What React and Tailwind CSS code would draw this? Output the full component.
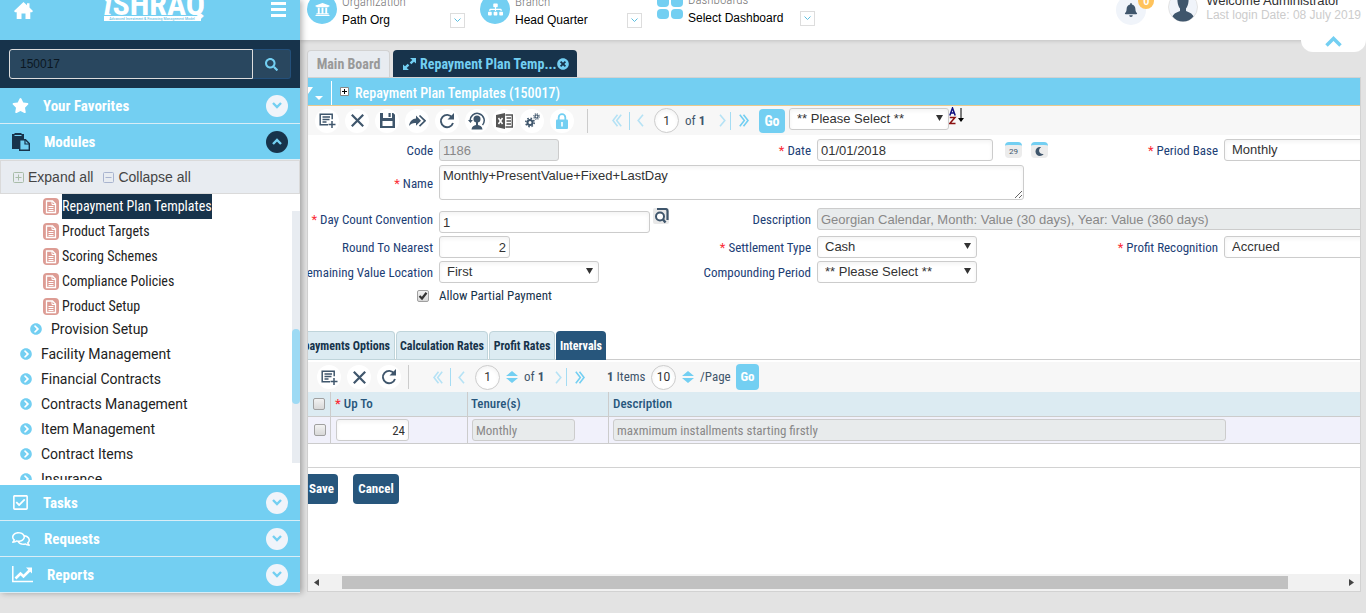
import React from "react";
import { FaUniversity, FaSitemap, FaSearch, FaStar, FaRegCheckSquare, FaRegComments, FaBell, FaTimesCircle, FaLock, FaChevronCircleRight, FaChevronDown, FaChevronUp, FaMoon } from "react-icons/fa";

const cond = "font-['Roboto_Condensed','Roboto',sans-serif]";

function Caret() {
  return (
    <svg width="7" height="6" viewBox="0 0 7 6" className="pointer-events-none absolute right-1.5 top-1/2 -mt-1 fill-[#333]">
      <path d="M0 0h7L3.500 6z" />
    </svg>
  );
}

function Select({ id, label, value, className = "" }) {
  return (
    <div className={"relative w-40 shrink-0 " + className}>
      <select id={id} aria-label={label} defaultValue={value} className="block h-[22px] w-full appearance-none rounded-[3px] border border-[#ccc] bg-white pl-[7px] text-[13px] leading-5 text-[#333] shadow-inner">
        <option>{value}</option>
      </select>
      <Caret />
    </div>
  );
}

function Check({ id, label, defaultChecked }) {
  return (
    <span className="relative block size-3">
      <input id={id} type="checkbox" aria-label={label} defaultChecked={defaultChecked} className="peer block size-3 appearance-none rounded-[2px] border border-[#a0a0a0] bg-linear-to-b from-[#f2f2f2] to-[#d8d8d8]" />
      <svg width="12" height="12" viewBox="0 0 12 12" fill="none" className="pointer-events-none absolute left-0 top-0 hidden peer-checked:block">
        <path d="M2.500 6 5 8.500 9.500 2.800" stroke="#333" strokeWidth="2.200" />
      </svg>
    </span>
  );
}

function Label({ htmlFor, required, children, className = "" }) {
  return (
    <label htmlFor={htmlFor} className={"flex justify-end whitespace-nowrap text-[13px] leading-6 text-[#1c4076] " + cond + " " + className}>
      <span>
        {required && <span className="text-red-500">* </span>}
        {children}
      </span>
    </label>
  );
}

function Section({ icon, label, open }) {
  return (
    <button type="button" className="flex h-9 w-full items-center border-b border-[#d9edf6] bg-[#73cff2] px-3 text-white">
      {icon}
      <span className={"pl-3.5 pt-0.5 text-[15px] font-bold " + cond}>{label}</span>
      <span className={"ml-auto flex size-[22px] items-center justify-center rounded-full text-[#73cff2] " + (open ? "bg-[#17334b]" : "bg-[#f0f4fa]")}>
        {open ? (
          <svg width="10" height="7" viewBox="0 0 10 7" fill="none" stroke="currentColor" strokeWidth="2.400"><path d="M1 6l4-4 4 4" /></svg>
        ) : (
          <svg width="10" height="7" viewBox="0 0 10 7" fill="none" stroke="currentColor" strokeWidth="2.400"><path d="M1 1l4 4 4-4" /></svg>
        )}
      </span>
    </button>
  );
}

function Leaf({ label, active }) {
  return (
    <li className="flex h-[25px] items-center gap-[3px] pl-[43px]">
      <svg width="16" height="17" viewBox="0 0 16 17" className="shrink-0">
        <rect width="16" height="17" rx="4" fill="#dd9c94" />
        <path d="M3.500 3h6l3 3v8.500h-9z" fill="none" stroke="#fff" strokeWidth="1.300" />
        <path d="M9 3v3.500h3.500" fill="none" stroke="#fff" />
        <path d="M5.500 8.500h5M5.500 10.500h5M5.500 12.500h5" stroke="#fff" />
      </svg>
      <a href="#page" className={"h-[25px] whitespace-nowrap text-sm leading-[25px] " + cond + (active ? " bg-[#17334b] text-white" : " text-[#222]")}>{label}</a>
    </li>
  );
}

function Branch({ label, nested }) {
  return (
    <li className={"flex h-[25px] items-center gap-[9px] " + (nested ? "-mt-[3px] pl-[30px]" : "pl-5")}>
      <FaChevronCircleRight size={12} className="shrink-0 text-[#73cff2]" />
      <a href="#module" className="whitespace-nowrap font-['Roboto',sans-serif] text-sm text-[#222]">{label}</a>
    </li>
  );
}

function ExpandBox({ minus }) {
  return (
    <svg width="11" height="11" viewBox="0 0 11 11" fill="none" stroke={minus ? "#a9b4cf" : "#a9bda9"}>
      <rect x=".5" y=".5" width="10" height="10" rx="1" />
      <path d="M2.500 5.500h6" />
      {!minus && <path d="M5.500 2.500v6" />}
    </svg>
  );
}

function ToolButton({ label, children }) {
  return (
    <button type="button" aria-label={label} className="flex size-6 shrink-0 items-center justify-center rounded-full bg-white text-[#3f566c]">
      {children}
    </button>
  );
}

const NewIcon = () => (
  <svg width="17" height="15" viewBox="0 0 17 15" fill="none" stroke="currentColor" strokeWidth="1.500">
    <path d="M9 11.700H1.200V1.200h12v5M3.500 4h7.500M3.500 6.500h7M3.500 9h4M13 8v7M9.500 11.500h7" />
  </svg>
);
const CloseIcon = () => (
  <svg width="13" height="13" viewBox="0 0 13 13" fill="none" stroke="currentColor" strokeWidth="2.200"><path d="M.8.8l11.400 11.400M12.200.8.8 12.200" /></svg>
);
const RefreshIcon = () => (
  <svg width="16" height="16" viewBox="0 0 16 16" fill="none" stroke="currentColor" strokeWidth="1.900">
    <path d="M13.200 4.500A6.200 6.200 0 1 0 14 10" /><path d="M15 0v6.500H8.500z" fill="currentColor" stroke="none" />
  </svg>
);
const SaveIcon = () => (
  <svg width="15" height="15" viewBox="0 0 15 15" fill="currentColor" fillRule="evenodd"><path d="M0 0h3v5h9V0h1.200L15 1.800V15H0zM2.500 8v5h10V8zM8.500 0h2.200v4H8.500z" /></svg>
);
const ForwardIcon = () => (
  <svg width="17" height="14" viewBox="0 0 17 14" fill="currentColor"><path d="M0 12C.8 7 3.500 4.800 7 4.500V1.500l5 5.300-5 5V9C4 8.700 1.800 9.700 0 12z" /><path d="M10.500 1.500 16 6.800l-5.500 5.300" fill="none" stroke="currentColor" strokeWidth="1.700" /></svg>
);
const UserIcon = () => (
  <svg width="18" height="18" viewBox="0 0 18 18" fill="none" stroke="currentColor">
    <path d="M2.300 9.500A7 7 0 1 1 14.500 13" strokeWidth="1.500" />
    <path d="M0 8h4.800L2.500 11z" fill="currentColor" stroke="none" />
    <circle cx="9" cy="7" r="3.500" fill="currentColor" stroke="none" /><path d="M3.500 17.500c.3-3 2.500-4 4.500-4.500v-3h2v3c2 .5 4.300 1.500 4.500 4.500z" fill="currentColor" stroke="none" />
  </svg>
);
const ExcelIcon = () => (
  <svg width="17" height="16" viewBox="0 0 17 16"><path d="M0 2 9 0v16l-9-2z" fill="#555" /><path d="M9.500 2h6.800v12H9.500" fill="none" stroke="#555" strokeWidth="1.400" /><path d="M10.500 5h4.500M10.500 8h4.500M10.500 11h4.500" stroke="#555" strokeWidth="1.700" /><path d="m2.500 5 4 6M6.500 5l-4 6" stroke="#fff" strokeWidth="1.500" /></svg>
);
const GearsIcon = () => (
  <svg width="15" height="15" viewBox="0 0 15 15" fill="none" stroke="currentColor">
    <circle cx="5" cy="9.500" r="2.500" strokeWidth="2" />
    <circle cx="5" cy="9.500" r="4.200" strokeWidth="1.600" strokeDasharray="1.600 1.700" />
    <circle cx="11.500" cy="3.500" r="1.500" strokeWidth="1.200" />
    <circle cx="11.500" cy="3.500" r="2.700" strokeWidth="1.200" strokeDasharray="1.100 1.020" />
  </svg>
);

function Pager({ side }) {
  const left = side === "left";
  return (
    <span className={"flex items-center " + (left ? "gap-[7px]" : "gap-2")}>
      {left && <button type="button" aria-label="First page"><svg width="10" height="13" viewBox="0 0 10 13" fill="none" stroke="#b5e2f5" strokeWidth="1.600"><path d="M5.500.8 1 6.500l4.500 5.700M9.200.8 4.700 6.500l4.500 5.700" /></svg></button>}
      {left && <span className="h-[18px] w-px bg-[#a5dcf3]" />}
      <button type="button" aria-label={left ? "Previous page" : "Next page"}>
        <svg width="7" height="13" viewBox="0 0 7 13" fill="none" stroke="#b5e2f5" strokeWidth="1.600"><path d={left ? "M6 .8 1.200 6.500 6 12.200" : "M1 .8l4.800 5.700L1 12.200"} /></svg>
      </button>
      {!left && <span className="-ml-1 h-[18px] w-px bg-[#a5dcf3]" />}
      {!left && <button type="button" aria-label="Last page"><svg width="10" height="13" viewBox="0 0 10 13" fill="none" stroke="#73cff2" strokeWidth="1.600"><path d="M.8.8l4.500 5.700-4.500 5.700M4.500.8 9 6.500l-4.500 5.700" /></svg></button>}
    </span>
  );
}

function Round({ value, label }) {
  return <input aria-label={label} defaultValue={value} className="block size-[25px] shrink-0 rounded-full border border-[#ccc] bg-white text-center font-['Roboto',sans-serif] text-xs text-[#333] shadow-inner" />;
}

const UpDown = () => (
  <svg width="12" height="12" viewBox="0 0 12 12" fill="#73cff2"><path d="M6 0l6 5H0zM6 12l6-5H0z" /></svg>
);

function HeaderItem({ icon, title, value, width }) {
  return (
    <div className={"flex shrink-0 items-end " + width}>
      {icon}
      <div className="ml-[5px] whitespace-nowrap text-xs leading-4 text-black">
        <div className={"h-5 text-[13px] font-light leading-5 text-[#777] " + cond}>{title}</div>
        {value}
      </div>
      <button type="button" aria-label={"Choose " + title} className="ml-auto flex size-[15px] items-center justify-center border border-[#ddd] bg-white text-[#5bbfe0]">
        <svg width="7" height="5" viewBox="0 0 7 5" fill="none" stroke="currentColor"><path d="M.5.5l3 3 3-3" /></svg>
      </button>
    </div>
  );
}

const box = "block h-[22px] rounded-[3px] border border-[#ccc] px-[3px] text-[13px] leading-5";
const white = " bg-white text-[#333] shadow-inner";
const grey = " bg-[#e8ebec] text-[#888]";

export default function App() {
  return (
    <div className="flex min-h-screen overflow-hidden bg-[#e3e3e3] font-['Liberation_Sans',Arial,sans-serif]">
      <aside className="z-10 w-[300px] shrink-0 self-start shadow-[2px_0_6px_rgba(0,0,0,0.3)]">
        <div className="flex h-10 items-start justify-between overflow-hidden bg-[#73cff2] px-3.5 text-white">
          <a href="#home" aria-label="Home" className="pt-0.5">
            <svg width="19" height="17" viewBox="0 0 19 17" fill="currentColor"><path d="M9.500 0 13 3.200V1.200h2.500v4.300L19 9l-1 1.200h-1.700V17h-4.800v-5.500h-4V17H2.700v-6.800H1L0 9z" /></svg>
          </a>
          <div className="-mt-3 flex w-[97px] flex-col">
            <div className={"h-7 whitespace-nowrap text-center text-[32px] font-bold leading-8 " + cond}><i className="font-['Liberation_Serif',serif]">i</i>SHRAQ</div>
            <div className={"h-[5px] overflow-hidden whitespace-nowrap bg-white text-center text-[4px] leading-[5px] text-[#4bb6e0] " + cond}>Advanced Investment &amp; Financing Management Model</div>
          </div>
          <button type="button" aria-label="Menu" className="pt-0.5">
            <svg width="15" height="15" viewBox="0 0 15 15" fill="#fff"><path d="M0 0h15v3H0zM0 6h15v3H0zM0 12h15v3H0z" /></svg>
          </button>
        </div>
        <div className="flex h-12 items-center bg-[#17334b] px-[9px]">
          <input aria-label="Search" defaultValue="150017" className="h-[30px] min-w-0 flex-1 rounded-l-[3px] border border-[#ddd] bg-[#29475f] px-2.5 text-xs text-[#0b1722]" />
          <button type="button" aria-label="Run search" className="flex h-[30px] w-[38px] items-center justify-center rounded-r-[3px] border border-l-0 border-[#24507a] bg-[#29475f] text-[#73cff2]"><FaSearch size={13} /></button>
        </div>
        <Section icon={<FaStar size={17} />} label="Your Favorites" />
        <Section
          open
          icon={<svg width="18" height="18" viewBox="0 0 18 18"><path d="M0 1h2.500V0h7v1H12v5H7v10H0z" fill="#17334b" /><path d="M2.500 2.500h7" stroke="#73cff2" /><path d="M7.700 6.700h5.800l3.800 3.800v6.800H7.700z" fill="#73cff2" stroke="#17334b" strokeWidth="1.400" /><path d="M13 7v4h4" fill="none" stroke="#17334b" strokeWidth="1.200" /></svg>}
          label="Modules"
        />
        <div className="flex h-[34px] items-center gap-2.5 border border-[#dadada] bg-[#e8ecf1] pl-3 text-sm text-[#444]">
          <button type="button" className="flex items-center gap-1"><ExpandBox />Expand all</button>
          <button type="button" className="flex items-center gap-1"><ExpandBox minus />Collapse all</button>
        </div>
        <div className="flex h-[291px] bg-white pb-[5px]">
          <ul className="min-w-0 flex-1 overflow-hidden">
            <Leaf label="Repayment Plan Templates" active />
            <Leaf label="Product Targets" />
            <Leaf label="Scoring Schemes" />
            <Leaf label="Compliance Policies" />
            <Leaf label="Product Setup" />
            <Branch nested label="Provision Setup" />
            <Branch label="Facility Management" />
            <Branch label="Financial Contracts" />
            <Branch label="Contracts Management" />
            <Branch label="Item Management" />
            <Branch label="Contract Items" />
            <Branch label="Insurance" />
          </ul>
          <div className="my-[17px] w-2 bg-[#e8ecf1] pt-[118px]">
            <div className="h-[75px] rounded bg-[#9ddaf4]" />
          </div>
        </div>
        <Section icon={<FaRegCheckSquare size={17} />} label="Tasks" />
        <Section icon={<FaRegComments size={18} />} label="Requests" />
        <Section
          icon={<svg width="21" height="17" viewBox="0 0 21 17" fill="none" stroke="#fff"><path d="M.8 0v15.500H21" strokeWidth="1.500" /><path d="M3.500 12.500 8.500 7.500l3 3 6-6" strokeWidth="2.600" /><path d="M14 1.500h6v6z" fill="#fff" stroke="none" /></svg>}
          label="Reports"
        />
      </aside>

      <div className="flex min-w-0 flex-1 flex-col">
        <header className="flex h-10 items-end overflow-hidden bg-white pb-3 pl-[7px] shadow-[0_1px_4px_rgba(0,0,0,0.15)]">
          <HeaderItem width="w-[158px]" title="Organization" value="Path Org" icon={<span className="mb-1 flex size-[30px] items-center justify-center rounded-full bg-[#73cff2] text-white"><FaUniversity size={15} /></span>} />
          <div className="w-[15px]" />
          <HeaderItem width="w-[162px]" title="Branch" value="Head Quarter" icon={<span className="mb-1 flex size-[30px] items-center justify-center rounded-full bg-[#73cff2] text-white"><FaSitemap size={15} /></span>} />
          <div className="w-[15px]" />
          <div className="pb-0.5">
            <HeaderItem width="w-[158px]" title="Dashboards" value="Select Dashboard" icon={<span className="mb-[7px] grid grid-cols-2 gap-0.5">{[0, 1, 2, 3].map((n) => <i key={n} className="h-2.5 w-3 rounded-sm bg-[#73cff2]" />)}</span>} />
          </div>
          <div className="ml-auto flex shrink-0 items-end pb-1.5 pr-[5px]">
            <span className="relative -mb-[3px] flex size-[30px] items-center justify-center rounded-full bg-[#f0f4fa] text-[#3f566c]">
              <FaBell size={14} />
              <b className="absolute -right-2 -top-0.5 flex size-4 items-center justify-center rounded-full bg-[#ffc35c] text-[11px] leading-4 text-white">0</b>
            </span>
            <svg width="30" height="30" viewBox="0 0 30 30" className="ml-[22px]"><circle cx="15" cy="15" r="14.500" fill="#f0f4fa" stroke="#e3e3e3" /><path d="M15 3c4 0 6 2.500 5.500 6.500-.3 3-1.200 5.500-2.500 7v2.500c3 1.500 6 2 7.500 5.500-2.500 3-6 5-10.500 5s-8-2-10.500-5c1.500-3.500 4.500-4 7.500-5.500v-2.500c-1.300-1.500-2.200-4-2.500-7C9 5.500 11 3 15 3z" fill="#3f566c" /></svg>
            <div className="ml-2 whitespace-nowrap text-xs leading-3.5">
              <div className="text-[13px] text-[#333]">Welcome Administrator</div>
              <div className="text-[#ccc]">Last login Date: 08 July 2019</div>
            </div>
          </div>
        </header>

        <div className="relative flex items-end gap-[3px] pl-[7px] pt-2.5">
          <button type="button" className={"h-[27px] w-[83px] rounded-t border border-b-0 border-[#d2d2d2] bg-[#e8ecf1] text-sm font-bold text-[#999] " + cond}>Main Board</button>
          <div className={"flex h-[27px] w-[184px] items-center rounded-t bg-[#17334b] pl-2.5 pr-2 text-sm font-bold text-[#73cff2] " + cond}>
            <svg width="13" height="12" viewBox="0 0 13 12" fill="currentColor"><path d="M7 0h6v5.500L11 3.700 8.300 6.200 6.700 4.600 9.300 2zM6 12H0V6.500l2 1.800 2.700-2.500 1.600 1.600L3.700 10z" /></svg>
            <span className="ml-1 whitespace-nowrap">Repayment Plan Temp...</span>
            <button type="button" aria-label="Close tab" className="ml-auto"><FaTimesCircle size={12} /></button>
          </div>
          <button type="button" aria-label="Collapse header" className="absolute right-0 top-0 flex h-3 w-[65px] items-start justify-center rounded-b-xl bg-white text-[#73cff2]">
            <svg width="17" height="11" viewBox="0 0 17 11" fill="none" stroke="currentColor" strokeWidth="3.500" className="-mt-1"><path d="M1.500 9.500l7-7 7 7" /></svg>
          </button>
        </div>

        <main className="ml-[7px] mr-[5px] flex h-[515px] flex-col overflow-hidden border border-[#d2d2d2] bg-white">
          <div className="flex h-7 shrink-0 items-center border-b border-[#e9c98d] bg-[#73cff2] text-white">
            <svg width="24" height="26" viewBox="0 0 24 26" fill="#fff"><path d="M0 8h5L0 15zM7 17h8l-4 4z" /><path d="M23 2h1v24h-1z" /></svg>
            <svg width="9" height="9" viewBox="0 0 9 9" className="ml-2"><path d="M.5.500h8v8h-8z" fill="#fff" stroke="#888" /><path d="M2 4.500h5M4.500 2v5" stroke="#000" /></svg>
            <h1 className={"ml-[6px] pt-0.5 text-sm font-medium " + cond}>Repayment Plan Templates (150017)</h1>
          </div>
          <div className="flex h-[29px] shrink-0 items-center bg-[#f7f7f7] pl-[7px]">
            <div className="flex gap-1.5">
              <ToolButton label="New"><NewIcon /></ToolButton>
              <ToolButton label="Delete"><CloseIcon /></ToolButton>
              <ToolButton label="Save record"><SaveIcon /></ToolButton>
              <ToolButton label="Forward"><ForwardIcon /></ToolButton>
              <ToolButton label="Refresh"><RefreshIcon /></ToolButton>
              <ToolButton label="User log"><UserIcon /></ToolButton>
            </div>
            <div className="ml-[3px] flex gap-1">
              <ToolButton label="Export to Excel"><ExcelIcon /></ToolButton>
              <ToolButton label="Settings"><GearsIcon /></ToolButton>
            </div>
            <span className="ml-1.5 flex"><ToolButton label="Lock">
              <svg width="12" height="16" viewBox="0 0 12 16" fill="#73cff2"><path d="M2.700 7V4.500a3.300 3.300 0 0 1 6.600 0V7" fill="none" stroke="#73cff2" strokeWidth="1.800" /><rect y="6.500" width="12" height="9.500" rx="1" /><path d="M6 9v4.500" stroke="#fff" strokeWidth="1.600" /></svg>
            </ToolButton></span>
            <span className="ml-[13px] mr-6 h-6 w-px bg-[#ccc]" />
            <Pager side="left" />
            <span className="ml-2.5"><Round value="1" label="Page" /></span>
            <span className={"ml-1.5 mr-3 w-[22px] whitespace-nowrap text-[13px] text-[#3f566c] " + cond}>of <b>1</b></span>
            <Pager side="right" />
            <button type="button" className={"ml-2.5 h-6 w-[26px] rounded bg-[#73cff2] text-sm font-bold text-white " + cond}>Go</button>
            <Select id="sort" label="Sort by" value="** Please Select **" className="ml-1 mb-1" />
            <svg width="15" height="18" viewBox="0 0 15 18" className="mb-2.5" fill="none"><path d="M.8 8.500 3.500 1l2.700 7.500M1.800 6h3.500" stroke="#101080" strokeWidth="1.500" /><path d="M.8 10.500H6L.8 16.500H6.500" stroke="#8b1010" strokeWidth="1.500" /><path d="M12 1v11" stroke="#000" /><path d="M9 11h6l-3 4z" fill="#000" /></svg>
          </div>

          <form className="grid shrink-0 grid-cols-[125px_246px_120px_285px_110px_minmax(160px,1fr)] grid-rows-[22px_37px_29px_22px_22px_22px] gap-x-1.5 gap-y-[3px] pt-1" onSubmit={(e) => e.preventDefault()}>
            <Label htmlFor="code">Code</Label>
            <input id="code" disabled defaultValue="1186" className={box + grey + " w-[120px]"} />
            <Label htmlFor="date" required>Date</Label>
            <div className="flex items-center">
              <input id="date" defaultValue="01/01/2018" className={box + white + " w-44"} />
              <button type="button" aria-label="Gregorian calendar" className="ml-3 h-4 w-[17px] rounded-sm border-t-[3px] border-[#73cff2] bg-[#ececec] text-center font-['Roboto',sans-serif] text-[8px] leading-3 text-[#3f566c]">29</button>
              <button type="button" aria-label="Hijri calendar" className="ml-[9px] flex h-4 w-[17px] items-center justify-center rounded-sm border-t-[3px] border-[#73cff2] bg-[#ececec] text-[#3f566c]"><FaMoon size={9} /></button>
            </div>
            <Label htmlFor="period" required>Period Base</Label>
            <Select id="period" value="Monthly" />

            <Label htmlFor="name" required className="pt-2">Name</Label>
            <textarea id="name" defaultValue="Monthly+PresentValue+Fixed+LastDay" className="col-span-3 mt-px block h-[35px] w-[585px] rounded-[3px] border border-[#ccc] bg-white px-[3px] py-0.5 text-[13px] leading-4 text-[#333] shadow-inner" />
            <span className="col-span-2" />

            <Label htmlFor="daycount" required className="pt-1">Day Count Convention</Label>
            <div className="flex items-start pt-1">
              <input id="daycount" defaultValue="1" className={box + white + " mt-[3px] w-[211px] shrink-0"} />
              <button type="button" aria-label="Look up" className="ml-[3px] shrink-0">
                <svg width="16" height="16" viewBox="0 0 16 16"><rect width="16" height="16" rx="2" fill="#e8e8e8" /><path d="M4 1h8.500q2 0 2 2v9" fill="none" stroke="#3f566c" strokeWidth="2.200" /><circle cx="7" cy="8.500" r="4" fill="#fff" stroke="#3f566c" strokeWidth="2" /><path d="m10 11.500 2.500 3" stroke="#3f566c" strokeWidth="2.500" /></svg>
              </button>
            </div>
            <Label htmlFor="desc" className="pt-1">Description</Label>
            <input id="desc" disabled defaultValue="Georgian Calendar, Month: Value (30 days), Year: Value (360 days)" className={box + grey + " col-span-3 mt-1 w-full"} />

            <Label htmlFor="round">Round To Nearest</Label>
            <input id="round" defaultValue="2" className={box + white + " w-[71px] text-right"} />
            <Label htmlFor="settle" required>Settlement Type</Label>
            <Select id="settle" value="Cash" />
            <Label htmlFor="profit" required>Profit Recognition</Label>
            <Select id="profit" value="Accrued" />

            <Label htmlFor="remain">Remaining Value Location</Label>
            <Select id="remain" value="First" />
            <Label htmlFor="compound">Compounding Period</Label>
            <Select id="compound" value="** Please Select **" />
            <span className="col-span-2" />

            <div className="flex items-start justify-end pr-1 pt-1"><Check id="partial" defaultChecked /></div>
            <label htmlFor="partial" className={"text-[13px] leading-5 text-[#17334b] " + cond}>Allow Partial Payment</label>
          </form>

          <div className={"mt-[23px] flex h-[29px] shrink-0 gap-px border-b border-[#ccc] text-xs font-bold " + cond}>
            <button type="button" className="flex h-[29px] w-[87px] items-center justify-end whitespace-nowrap rounded-tr border border-l-0 border-[#bfd4da] bg-[#dcebf2] pr-1 text-[#17334b]"><span>Repayments Options</span></button>
            <button type="button" className="h-[29px] w-[92px] whitespace-nowrap rounded-t border border-[#bfd4da] bg-[#dcebf2] text-[#17334b]">Calculation Rates</button>
            <button type="button" className="h-[29px] w-[66px] whitespace-nowrap rounded-t border border-[#bfd4da] bg-[#dcebf2] text-[#17334b]">Profit Rates</button>
            <button type="button" className="h-[29px] w-[50px] whitespace-nowrap rounded-t bg-[#27567c] text-white">Intervals</button>
          </div>

          <div className={"mt-0.5 flex h-[30px] shrink-0 items-center bg-[#f7f7f7] pl-[9px] text-[13px] text-[#3f566c] " + cond}>
            <div className="flex gap-1.5">
              <ToolButton label="New row"><NewIcon /></ToolButton>
              <ToolButton label="Delete row"><CloseIcon /></ToolButton>
              <ToolButton label="Refresh rows"><RefreshIcon /></ToolButton>
            </div>
            <span className="ml-[7px] mr-6 h-6 w-px bg-[#ccc]" />
            <Pager side="left" />
            <span className="ml-2.5 mr-1.5"><Round value="1" label="Row page" /></span>
            <UpDown />
            <span className="ml-1.5 mr-3 w-[19px] whitespace-nowrap">of <b>1</b></span>
            <Pager side="right" />
            <span className="ml-[22px] w-11 whitespace-nowrap"><b>1</b> Items</span>
            <span className="mr-1.5"><Round value="10" label="Rows per page" /></span>
            <UpDown />
            <span className="ml-1.5 w-9">/Page</span>
            <button type="button" className="h-[26px] w-[23px] rounded bg-[#73cff2] font-bold text-white">Go</button>
          </div>

          <table className={"w-full shrink-0 table-fixed border-separate border-spacing-0 text-left text-[13px] text-[#27567c] " + cond}>
            <colgroup><col className="w-[23px]" /><col className="w-[137px]" /><col className="w-[141px]" /><col /></colgroup>
            <thead>
              <tr className="h-[25px] bg-[#dcebf2]">
                <th className="border-b border-r border-[#ccc] pl-[5px]"><Check label="Select all" /></th>
                <th className="border-b border-r border-[#ccc] px-1 font-medium"><span className="text-red-500">* </span>Up To</th>
                <th className="border-b border-r border-[#ccc] px-[3px] font-medium">Tenure(s)</th>
                <th className="border-b border-[#ccc] px-1 font-medium">Description</th>
              </tr>
            </thead>
            <tbody>
              <tr className="h-[27px] bg-[#f1f1fb]">
                <td className="border-b border-r border-[#ccc] pl-1.5"><Check label="Select row" /></td>
                <td className="border-b border-r border-[#ccc] px-[5px]"><input aria-label="Up To" defaultValue="24" className={box + white + " w-[73px] text-right"} /></td>
                <td className="border-b border-r border-[#ccc] px-1"><input aria-label="Tenure" disabled defaultValue="Monthly" className={box + grey + " w-[103px]"} /></td>
                <td className="border-b border-[#ccc] px-1"><input aria-label="Description" disabled defaultValue="maxmimum installments starting firstly" className={box + grey + " w-[613px]"} /></td>
              </tr>
            </tbody>
          </table>

          <div className={"mt-[23px] flex shrink-0 gap-[15px] border-t border-[#d2d2d2] pt-1.5 text-[13px] font-bold text-white " + cond}>
            <button type="button" className="flex h-[30px] w-[30px] items-center justify-end rounded-r-sm bg-[#27567c] pr-1">Save</button>
            <button type="button" className="h-[30px] w-[46px] rounded-sm bg-[#27567c]">Cancel</button>
          </div>

          <div className="mt-auto flex h-[17px] shrink-0 items-center bg-[#f1f1f1] px-1.5">
            <svg width="5" height="7" viewBox="0 0 5 7" fill="#444"><path d="M5 0v7L0 3.500z" /></svg>
            <div className="ml-[23px] h-[13px] w-[91%] bg-[#c1c1c1]" />
            <svg width="5" height="7" viewBox="0 0 5 7" className="ml-auto" fill="#444"><path d="M0 0v7l5-3.500z" /></svg>
          </div>
        </main>
      </div>
    </div>
  );
}
